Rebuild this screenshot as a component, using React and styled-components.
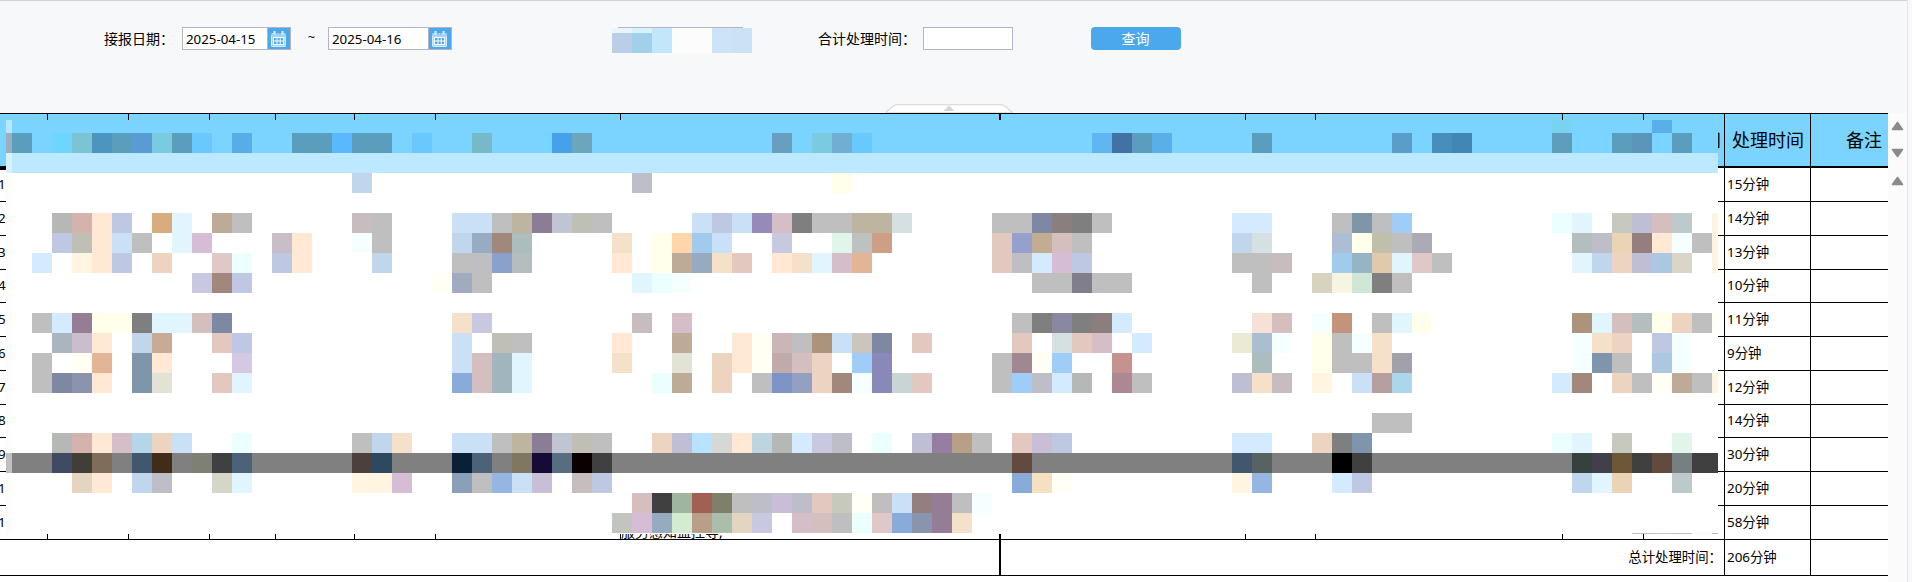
import React from 'react'
import styled, { createGlobalStyle } from 'styled-components'

const GlobalStyle = createGlobalStyle`
  body {
    margin: 0;
    background: #f7f8fa;
    color: #000;
    font-family: "Noto Sans", "Noto Sans CJK SC", sans-serif;
    font-size: 14px;
    overflow: hidden;
  }
  * {
    box-sizing: border-box;
  }
`

const Page = styled.div`
  display: flex;
  width: 1912px;
  height: 582px;
`

const Main = styled.div`
  width: 1907px;
`

const Gutter = styled.div`
  flex: 1;
  border-left: 1px solid #e6e6ea;
  background: #f8f8fa;
`

const Filters = styled.div`
  position: relative;
  height: 113px;
  border-top: 1px solid #d2d3d6;
  padding: 26px 0 0 104px;
  display: flex;
  align-items: flex-start;
  background: #f7f8fa;
`

const Label = styled.label`
  width: ${p => p.$width}px;
  line-height: 23px;
  white-space: nowrap;
`

const Field = styled.div`
  display: flex;
  width: ${p => p.$width}px;
  height: 23px;
  border: 1px solid #b4b4c6;
  background: #fff;
`

const FieldText = styled.span`
  flex: 1;
  padding-left: 3px;
  font-size: 13.3px;
  line-height: 22px;
`

const CalendarButton = styled.span`
  width: 23px;
  padding: 3px 0 0 2px;
  border-left: 1px solid #b4b4c6;
  background: #4aa8eb;
  line-height: 0;
`

const Tilde = styled.span`
  width: 37px;
  padding-left: 4px;
  text-align: center;
  font-size: 13px;
  line-height: 21px;
`

const MaskedField = styled.div`
  width: 140px;
  margin: 0 66px 0 160px;
  display: grid;
  grid-template-columns: repeat(7, 20px);
  grid-template-rows: 1px 5px 20px;
`

const MaskedBorder = styled.span`
  grid-column: 1 / -1;
  width: 125px;
  margin-left: 6px;
  background: #b4b4c6;
`

const Button = styled.button`
  width: 90px;
  height: 23px;
  margin-left: 78px;
  padding: 0 1px 0 0;
  border: 0;
  border-radius: 4px;
  background: #4aa8eb;
  color: #fff;
  font: inherit;
  line-height: 23px;
`

const Handle = styled.svg`
  position: absolute;
  left: 885px;
  bottom: 0;
`

const Content = styled.div`
  display: flex;
  height: 469px;
`

const Report = styled.div`
  position: relative;
  width: 1888px;
  border-top: 1px solid #000;
  background: #fff;
`

const Scroll = styled.div`
  width: 19px;
  display: flex;
  flex-direction: column;
  align-items: center;
  padding-top: 8px;
  background: #fbfbfc;
`

const Arrow = styled.svg`
  margin-bottom: ${p => p.$gap || 0}px;
  transform: ${p => (p.$down ? 'rotate(180deg)' : 'none')};
`

const COLUMNS = [48, 81, 81, 66, 79, 81, 185, 380, 245, 70, 247, 81, 81, 86, 77]

const Row = styled.div`
  display: grid;
  grid-template-columns: ${COLUMNS.map(w => w + 'px').join(' ')};
  height: ${p => p.$height}px;
`

const Cell = styled.div`
  display: flex;
  align-items: center;
  min-width: 0;
  padding-left: ${p => (p.$index === 0 ? 0 : 2)}px;
  padding-bottom: 2px;
  border-bottom: 1px solid #000;
  border-right: ${p => (p.$index === 14 ? 0 : p.$index === 7 ? 2 : 1)}px solid #000;
  font-size: 13.4px;
  line-height: 20px;
  white-space: nowrap;
`

const RowNumber = styled.span`
  margin-left: -2px;
`

const HeadCell = styled(Cell)`
  justify-content: flex-end;
  padding-right: ${p => p.$pad}px;
  padding-bottom: 0;
  border-bottom-width: ${p => (p.$index === 0 ? 4 : 2)}px;
  height: ${p => (p.$index === 0 ? 56 : 54)}px;
  background: #7bd3ff;
  font-size: 18px;
`

const NoteCell = styled(Cell)`
  align-items: flex-end;
  padding: 0;
  font-size: 14px;
  line-height: 15px;
`

const TotalCell = styled(Cell)`
  grid-column: span ${p => p.$span};
  justify-content: flex-end;
  padding-right: 2px;
  border-right-width: ${p => p.$border}px;
`

const Mosaic = styled.div`
  position: absolute;
  left: 6px;
  top: 6px;
  display: grid;
  grid-template-columns: 6px repeat(85, 20px) 6px;
  grid-template-rows: 13px repeat(20, 20px) 1px;
  background: #fff;
`

const Tile = styled.span``

const HEADERS = { 12: ['时间', 3], 13: ['处理时间', 6], 14: ['备注', 6] }

const ROWS = [
  ['15分钟', 34],
  ['14分钟', 34],
  ['13分钟', 34],
  ['10分钟', 33],
  ['11分钟', 34],
  ['9分钟', 34],
  ['12分钟', 34],
  ['14分钟', 33],
  ['30分钟', 34],
  ['20分钟', 34],
  ['58分钟', 34]
]

// one string per mosaic row: "column colour" or "first-last colour"
const TILES = [
  '0-85 7bd3ff,-1 b9e6fa,77 78d3f0,82 5aafe9',
  '0-85 7bd3ff,-1 9aafbe,0 5b9dbd,2 70d5fd,3 7cc4d3,4 4b95bf,5 5b9dbd,6 5b9bd3,7 7acbdf,8 5b9dbd,9 69c9ff,11 57ade8,14-15 5b9dbd,16 59b8ff,17-18 5b9dbd,20 69c9ff,23 76b9c9,27 47a0ea,28 6da5bd,38 689fbe,40 7acbdf,41 70afd3,42 69c9ff,54 5eb7f1,55 4271a5,56 5b9dbd,57 5aafe9,62 5b9dbd,69 5b9dc9,71 478ebd,72 4286b5,77 5f9dbd,80 5b9dbd,81 5b95b9,83 5b9dbd',
  '-1 d9f0fa,0-85 bce9ff',
  '17 c0d6ed,31 bebec9,41 ffffeb',
  '',
  '2 b5b8b5,3 d3b3ab,4 ffe9d5,5 bec8e2,7 d9ac7f,8 e1f5ff,10 bdab97,11 bfbfbf,17 c8bdbe,18 bfbfbf,22-23 c9e0f7,24 bfbfbf,25 beb5a0,26 8a7e96,27 bfc5d2,28 bfbfb5,29 bfbfbf,34 c9e0f7,35 bec8e2,36 c9e0f7,37 968ab8,38 d5bec8,39 7f7f7f,40-41 bfbfbf,42-43 beb5a0,44 d6e0e2,49-50 bfbfbf,51 7f88a2,52 8a7f7e,53 7f7f7f,54 bfbfbf,61-62 d4eaff,66 bfbfbf,67 7f95a8,68 bfbfbf,69 a0cdf7,77 ebffff,78 e1f5ff,80 c8c9be,81 bebed5,82 d5bebe,83 bec9cb,85 fff5e1',
  '2 bec8e2,3 bfbfb5,4 ffe9d5,5 c9e0f7,6 bfbfbf,8 e1f5ff,9 d5bed5,13 c8bec8,14 ffe9d5,17 f5ffff,18 bfbfbf,22 c0d6ed,23 97abc3,24 a2887c,25 abbebd,30 f5e1c9,32 ffffeb,33 ffd6ab,34 a1cbec,35 c9e0f7,38 c8c8e0,41 e1f5eb,42 bec1c2,43 cd9f86,49 e2c8be,50 95a0cd,51 c2ad92,52 d5bebe,53 bfbfbf,61 c0d6ed,62 d6e0e2,66 abbed5,67 ffffeb,68 bfbfab,69 bfbfbf,70 ababb5,78 b5bebe,79 bebec9,80 ebd3b5,81 957f7e,82 ffe9d5,83 f5ffff,84 bfbfbf,85 fff5e1',
  '1 d4eaff,3 fff5e1,4 ffe9d5,5 bec8e2,7 ecd4c0,10 e0c8c8,11 ebffff,13 bec8e2,14 ffe9d5,18 c0d6ed,22 bfbfbf,23 bfbfc3,24 8aa0cd,25 b5bebe,30 ffe9d5,32 ffffeb,33 bdab97,34 97abc0,35 f5e1c9,36 e2c8be,38 ffe9d5,39 f5e1c9,40 e1f5ff,41 d5bec8,42 e1b595,49 e2c8be,50 bfbfc3,51 d4eaff,52 d5bed5,53 bec8e2,61-62 bfbfbf,63 c8bdbe,66 a1cbec,67 95b5c5,68 e1c9ab,69 e1f5ff,70 e0c8c8,71 bfbfbf,78 e1f5ff,79 c0d6ed,80 ecd4c0,81 bebed5,82 abc8e0,83 d9d6c8,85 fff5e1',
  '9 c8c8e0,10 a2887c,11 bec8e2,21 fffff5,22 a0abc0,23 bfbfbf,31 e1f5ff,32 ebffff,33 f5ffff,51-52 bfbfbf,53 7f7e8a,54-55 bfbfbf,62 bfbfbf,65 d8d3be,66 f5f5e1,67 d0e6d7,68 7f7f7f,69 bfbfbf',
  '',
  '1 bfbfbf,2 d4eaff,3 957e95,4-5 ffffeb,6 7f7f7f,7-8 e1f5ff,9 d5bebe,10 7f88a2,22 f5e1c9,23 c8c8e0,31 c8bdbe,33 d5bec8,50 bfbfbf,51 7f7f7f,52 8a88a0,53 7f7f7f,54 8a7f7e,55 d4eaff,62 f5e1d5,63 d5bebe,65 f5ffff,66 c3937c,68 bfbfbf,69 e1f5ff,70 ffffeb,78 ab937c,79 e1f5ff,80 d5bebe,81 b5bebe,82 ffffeb,83 ecd4c0,84 bfbfbf,85 fffff5',
  '2 abb5be,3 cabecd,4 ffe9d5,6 c0d6ed,7 c8ab95,10 e2c8be,11 bec8e2,22 c9e0f7,24 bfbfb5,25 bfbfbf,30 ffe9d5,33 bdab97,36 ffe9d5,37 fffff5,38 cab5b9,39 bfbfbf,40 ab937c,41 c9e0f7,42 cac6be,43 7f88a2,45 e2c8be,50 e2c8be,52 d5e1e0,53 e2c8be,54 d5bec8,56 d4eaff,61 ebead5,62 abbed0,63 f5ffff,65 ffffeb,66 bfbfbf,67 f5ffff,68 f5e1c9,78 f5ffff,79 f5e1c9,80 ecd4c0,82 bec8e2,83 f5ffff',
  '1 bfbfbf,3 fffff5,4 e1b595,6 7f95ab,7 ffe9d5,11 d5c8e2,22 c9e0f7,23 d5bebe,24 a0b5be,25 e1f5ff,30 f5e1c9,33 e2e3d6,35 ecd4c0,36 ffe9d5,37 fffff5,38 c0abaa,39 d5bec0,40 ecd4c0,42 a0cdf7,43 8a88b8,49 bfbfbf,50 a08892,51 fffff5,52 a0cdf7,55 c59290,62 abbebd,65 ffffeb,66-67 bfbfbf,68 f5e1c9,69 a2a0ab,78 f5ffff,79 7f95ab,80 bfbfbf,82 abc8e0,83 f5ffff',
  '1 bfbfbf,2 7f88a2,3 8a95ad,4 ffe9d5,6 7f95ab,7 e2e3d6,10 e2c8be,11 e1f5ff,22 88abd9,23 d5bebe,24 a0b5be,25 e1f5ff,32 ebffff,33 bdab97,35 ecd4c0,37 bfbfbf,38 7f93c6,39 93a0c2,40 ecd4c0,41 a2887c,42 f5ffff,43 8a88b8,44 c9d5d5,45 e2c8be,49 bfbfbf,50 a0cdf7,51 bebec9,52 d4eaff,53 b5b8b5,55 ab8892,56 bfbfbf,61 bebed5,62 f5e1c9,63 c8bdbe,65 fff5e1,67 c9e0f7,68 b5a09f,69 abd6eb,77 d4eaff,78 a2887c,80 ecd4c0,81 bfbfbf,82 fffff5,83 bdab97,84 bfbfbf,85 fff5e1',
  '',
  '68-69 bfbfbf',
  '2 b5b8b5,3 d3b3ab,4 ffe9d5,5 d5bec8,6 b5d5e9,7 ecd4c0,8 c9e0f7,11 ebffff,17 bfbfbf,18 c0d6ed,19 f5e1c9,22-23 c9e0f7,24 bfbfbf,25 beb5a0,26 8a7e96,27 bfc5d2,28 bfbfb5,29 bfbfbf,32 ecd4c0,33 bebed5,34 b8e2ff,35 d6d8d5,36 ffe9d5,37 bed5e0,38 b5b8b5,39 d4eaff,40 c8c8e0,41 bebec9,43 ebffff,45 bebed5,46 957ea2,47 b8a088,48 bfbfbf,50 e2c8be,51 c8bed5,52 bec8e2,61-62 d4eaff,65 ecd4c0,66 7f7f7f,67 7f95ab,77 ebffff,78 e1f5ff,80 c8c9be,83 e1f5eb',
  '-1 bfbfbf,0-85 808080,2 404a62,3 403f36,4 806d58,6 40576d,7 402c19,9 807f76,10 404040,11 4c6279,17 4c403f,18 2d4960,22 0a2036,23 4c6279,25 807762,26 160a36,27 586d80,28 0a0000,29 404040,50 624a3e,61 40576d,62 586260,66 000000,67 404040,78 36403f,79 40404a,80 6d5736,81 404040,82 624a3e,83 768080,84-85 404040',
  '3 e4d5c0,4 ffe9d5,6 c0d6ed,7 bebec9,10 d5d5c8,11 e1f5ff,17-18 fff5e1,19 d5bed5,22 8aa0b8,23 bfbfbf,24 95b5e2,25 c9e0f7,26 c8bed5,28 c8bdbe,29 bec8e2,50 88abd9,51 f5e1c0,52 fffff5,61 fff5e1,62 95b5e2,66 d4eaff,67 bec8e2,78 c0d6ed,79 e1f5ff,80 ebd3b5,83 bec9cb',
  '31 d5bebe,32 404040,33 a0b5a0,34 a26052,35 7f806c,36 bfbfbf,37 bebec9,38 c8bed5,39 bebec9,40 e2c8be,41 c8c9be,42 fffff5,43 bfbfbf,44 c9e0f7,45 957f7e,46 957e95,47 bfbfbf,48 f5ffff',
  '30 c2c4c0,31 d5bed5,32 97abc0,33 d3ebd0,34 b8a088,35 abbeab,36 e4d5c0,37 c8c8e0,39 d5bec8,40 d5bebe,41 bfbfbf,42 ebffff,43 e0c8c8,44 88abd9,45 8a95ad,46 957e95,47 f5e1c9',
  '81 c8bdbe,82 d5bebe,83 bfbfbf,84 ebffeb,85 bfbfbf'
]

const MASKED = [
  ['#e8f6fb', '#d6f3fa', '#c2e7fb', '#fcfcfc', '#fcfcfc', '#cde4f8', '#cae2f6'],
  ['#b9cfe8', '#a2cfe9', '#c2e7fb', '#fcfcfc', '#fcfcfc', '#cde4f8', '#cae2f6']
]

const renderTiles = (line, row) =>
  (line.startsWith('-1') || line.includes(',-1') ? line : `-1 fcfcfc,${line}`)
    .split(',')
    .filter(Boolean)
    .map(item => {
      const [range, color] = item.split(' ')
      const [first, last] = range === '-1' ? [-1, -1] : range.split('-').map(Number)
      return (
        <Tile
          key={`${row}:${range}`}
          style={{
            gridRow: row + 1,
            gridColumn: `${first + 2} / ${(last === undefined ? first : last) + 3}`,
            background: `#${color}`
          }}
        />
      )
    })

const CalendarIcon = () => (
  <svg width="17" height="17" viewBox="0 0 17 17">
    <rect x="1" y="2" width="15" height="14" rx="1.5" fill="#a5d4f7" />
    <path d="M1.5 5v9.5q0 1 1 1h12q1 0 1-1V5" fill="none" stroke="#d9eefd" />
    <path d="M4.5 0v3.5M12.5 0v3.5" stroke="#d9eefd" strokeWidth="2" />
    <path d="M7 2v1.5M10 2v1.5" stroke="#4aa8eb" />
    <path d="M3 6h11v8H3z" fill="#4aa8eb" />
    <path d="M3 6.5h11M3 10h11M3 13.5h11M3.5 6v8M7 6v8M10.2 6v8M13.5 6v8" fill="none" stroke="#fff" />
  </svg>
)

const DateField = ({ value, width }) => (
  <Field $width={width}>
    <FieldText>{value}</FieldText>
    <CalendarButton>
      <CalendarIcon />
    </CalendarButton>
  </Field>
)

const ScrollArrow = ({ down, gap }) => (
  <Arrow $down={down} $gap={gap} width="13" height="10" viewBox="0 0 13 10">
    <path d="M6.5 1.5L11.5 8.5H1.5z" fill="#8b8b8b" stroke="#8b8b8b" strokeWidth="1.6" strokeLinejoin="round" />
  </Arrow>
)

const FilterBar = () => (
  <Filters>
    <Label $width={78}>接报日期：</Label>
    <DateField value="2025-04-15" width={109} />
    <Tilde>~</Tilde>
    <DateField value="2025-04-16" width={124} />
    <MaskedField>
      <MaskedBorder />
      {MASKED.flat().map((color, i) => (
        <Tile key={i} style={{ background: color }} />
      ))}
    </MaskedField>
    <Label $width={105}>合计处理时间：</Label>
    <Field $width={90} />
    <Button>查询</Button>
    <Handle width="128" height="9" viewBox="0 0 128 9">
      <path d="M0 9L7 3Q10 .5 13 .5h102Q118 .5 121 3l7 6z" fill="#fff" stroke="#dcdcdc" strokeWidth="1.4" />
      <path d="M64 1.5L69.5 7h-11z" fill="#d6d6d6" />
    </Handle>
  </Filters>
)

const App = () => (
  <Page>
    <GlobalStyle />
    <Main>
      <FilterBar />
      <Content>
        <Report>
          <Row $height={54}>
            {COLUMNS.map((_, i) => {
              const [text, pad] = HEADERS[i] || ['', 0]
              return <HeadCell key={i} $index={i} $pad={pad}>{text}</HeadCell>
            })}
          </Row>
          {ROWS.map(([time, height], r) => (
            <Row key={r} $height={height}>
              {COLUMNS.map((_, i) => {
                if (i === 7 && r === ROWS.length - 1) {
                  return <NoteCell key={i} $index={i}>服务感知监控等,</NoteCell>
                }
                return (
                  <Cell key={i} $index={i}>
                    {i === 0 && <RowNumber>{r + 1}</RowNumber>}
                    {i === 13 && time}
                  </Cell>
                )
              })}
            </Row>
          ))}
          <Row $height={36}>
            <TotalCell $span={8} $border={2} />
            <TotalCell $span={5} $border={1}>总计处理时间：</TotalCell>
            <Cell $index={13}>206分钟</Cell>
            <Cell $index={14} />
          </Row>
          <Mosaic>{TILES.map(renderTiles)}</Mosaic>
        </Report>
        <Scroll>
          <ScrollArrow gap={17} />
          <ScrollArrow gap={18} down />
          <ScrollArrow />
        </Scroll>
      </Content>
    </Main>
    <Gutter />
  </Page>
)

export default App
